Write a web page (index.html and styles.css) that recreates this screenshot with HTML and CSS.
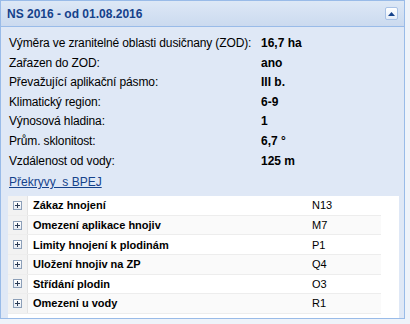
FILE: index.html
```html
<!DOCTYPE html>
<html>
<head>
<meta charset="utf-8">
<link rel="stylesheet" href="styles.css">
</head>
<body>
<div class="panel">
  <div class="header">
    <span class="title">NS 2016 - od 01.08.2016</span>
    <span class="tool"><svg width="7" height="4" viewBox="0 0 7 4"><polygon points="0,4 7,4 3.5,0" fill="#15428b"/></svg></span>
  </div>
  <div class="body">
    <div class="info">
      <div class="lbl">Výměra ve zranitelné oblasti dusičnany (ZOD):</div><div class="val">16,7 ha</div>
      <div class="lbl">Zařazen do ZOD:</div><div class="val">ano</div>
      <div class="lbl">Převažující aplikační pásmo:</div><div class="val">III b.</div>
      <div class="lbl">Klimatický region:</div><div class="val">6-9</div>
      <div class="lbl">Výnosová hladina:</div><div class="val">1</div>
      <div class="lbl">Prům. sklonitost:</div><div class="val">6,7 °</div>
      <div class="lbl">Vzdálenost od vody:</div><div class="val">125 m</div>
    </div>
    <a class="link" href="#">Překryvy&nbsp; s BPEJ</a>
    <div class="grid">
      <div class="row"><div class="exp"><span class="plus"></span></div><div class="name">Zákaz hnojení</div><div class="code">N13</div></div>
      <div class="row alt"><div class="exp"><span class="plus"></span></div><div class="name">Omezení aplikace hnojiv</div><div class="code">M7</div></div>
      <div class="row"><div class="exp"><span class="plus"></span></div><div class="name">Limity hnojení k plodinám</div><div class="code">P1</div></div>
      <div class="row alt"><div class="exp"><span class="plus"></span></div><div class="name">Uložení hnojiv na ZP</div><div class="code">Q4</div></div>
      <div class="row"><div class="exp"><span class="plus"></span></div><div class="name">Střídání plodin</div><div class="code">O3</div></div>
      <div class="row alt"><div class="exp"><span class="plus"></span></div><div class="name">Omezení u vody</div><div class="code">R1</div></div>
    </div>
  </div>
</div>
</body>
</html>
```
FILE: styles.css
```css
html, body {
  margin: 0;
  padding: 0;
  background: #eef3fa;
  font-family: "Liberation Sans", Arial, sans-serif;
}
.panel {
  width: 403px;
  height: 317px;
  border: 1px solid #99bbe8;
  background: #dfe8f6;
  display: flex;
  flex-direction: column;
}
.header {
  height: 25px;
  border-bottom: 1px solid #99bbe8;
  background: linear-gradient(#dde8f6, #cbdaef);
  display: flex;
  align-items: center;
  justify-content: space-between;
  padding: 0 6px 0 6px;
}
.title {
  font-weight: bold;
  font-size: 12px;
  color: #15428b;
}
.tool {
  width: 11px;
  height: 11px;
  border: 1px solid #a9c2e6;
  border-radius: 2px;
  background: linear-gradient(#ffffff, #e3ecf8);
  display: flex;
  align-items: center;
  justify-content: center;
}
.body {
  flex: 1;
  padding: 7px 6px 0 7px;
  display: flex;
  flex-direction: column;
}
.info {
  display: grid;
  grid-template-columns: 253px auto;
  font-size: 12px;
  line-height: 19.6px;
  color: #000;
}
.lbl {
  padding-left: 1px;
  letter-spacing: -0.13px;
}
.val {
  font-weight: bold;
}
.link {
  font-size: 12px;
  color: #15428b;
  line-height: 19px;
  margin-top: 2px;
  padding-left: 1px;
  align-self: flex-start;
}
.grid {
  margin-top: 4px;
  background: #fff;
  width: 391px;
  flex: 1;
}
.row {
  display: flex;
  width: 373px;
  height: 18.6px;
  border-bottom: 1px solid #ededed;
  font-size: 11px;
  align-items: center;
}
.row.alt {
  background: #fafafa;
}
.exp {
  width: 20px;
  height: 100%;
  background: #f2f2f2;
  border-right: 1px solid #e4e4e4;
  display: flex;
  align-items: center;
  justify-content: center;
  box-sizing: border-box;
}
.plus {
  width: 9px;
  height: 9px;
  box-sizing: border-box;
  border: 1px solid #8c9fb8;
  background: linear-gradient(#ffffff, #e6ebf2);
  position: relative;
}
.plus::before, .plus::after {
  content: "";
  position: absolute;
  background: #2b3b55;
}
.plus::before {
  left: 1px;
  top: 3px;
  width: 5px;
  height: 1px;
}
.plus::after {
  left: 3px;
  top: 1px;
  width: 1px;
  height: 5px;
}
.name {
  width: 274px;
  padding-left: 5px;
  font-weight: bold;
  color: #000;
}
.code {
  padding-left: 5px;
  color: #000;
}
```
